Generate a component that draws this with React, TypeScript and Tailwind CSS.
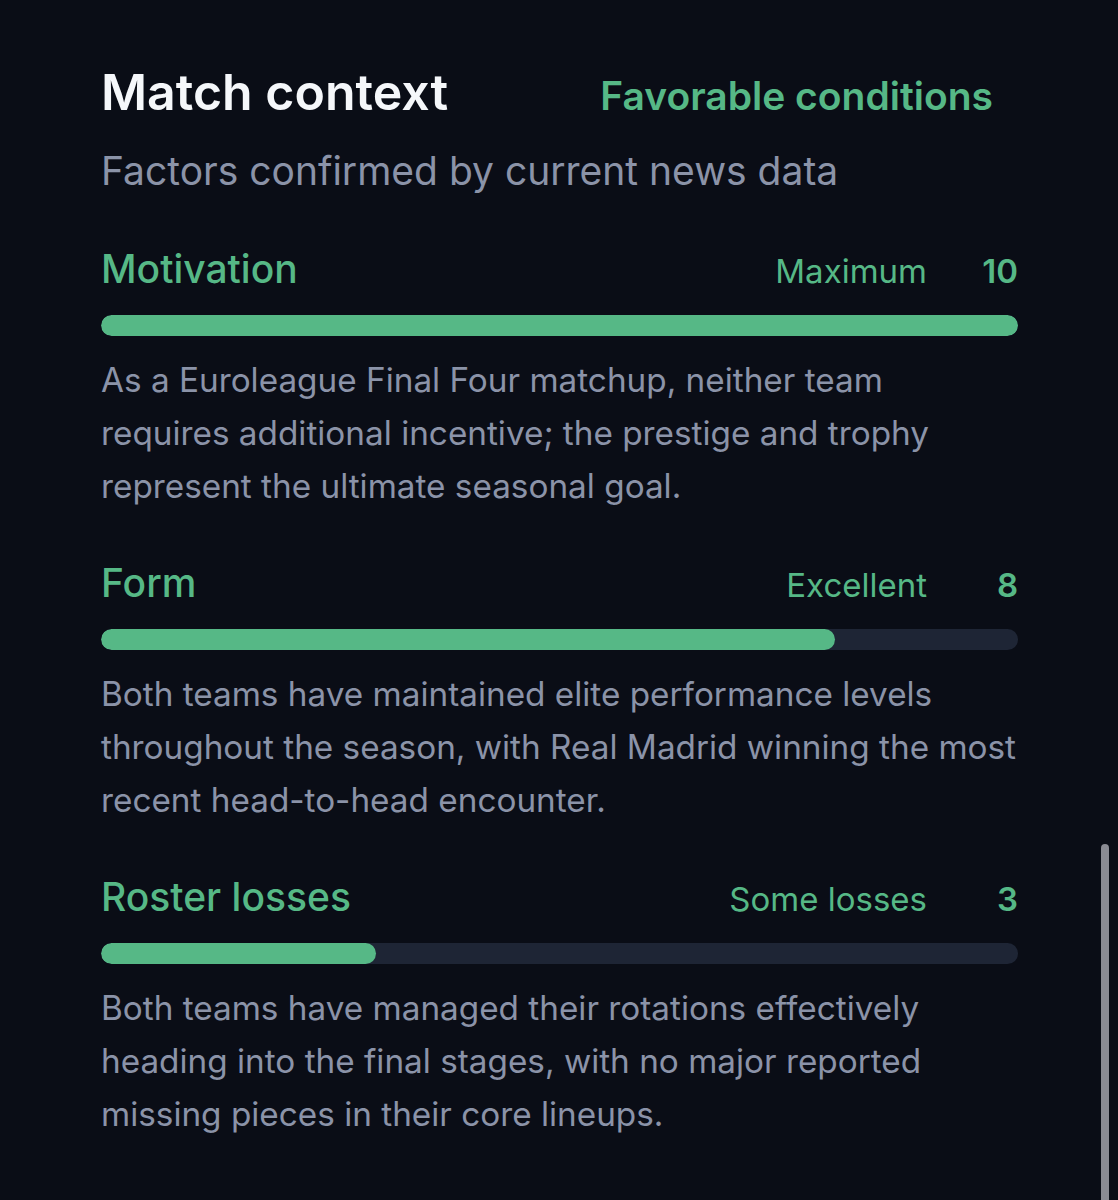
import React from "react";

type Factor = {
  label: string;
  status: string;
  score: number;
  text: string;
};

const factors: Factor[] = [
  {
    label: "Motivation",
    status: "Maximum",
    score: 10,
    text: "As a Euroleague Final Four matchup, neither team requires additional incentive; the prestige and trophy represent the ultimate seasonal goal.",
  },
  {
    label: "Form",
    status: "Excellent",
    score: 8,
    text: "Both teams have maintained elite performance levels throughout the season, with Real Madrid winning the most recent head-to-head encounter.",
  },
  {
    label: "Roster losses",
    status: "Some losses",
    score: 3,
    text: "Both teams have managed their rotations effectively heading into the final stages, with no major reported missing pieces in their core lineups.",
  },
];

function FactorRow({ factor }: { factor: Factor }) {
  return (
    <div className="flex flex-col">
      <div className="flex items-baseline justify-between h-[48px]">
        <span className="text-[39px] leading-[48px] font-medium text-[#56b886]">
          {factor.label}
        </span>
        <div className="flex items-baseline">
          <span className="text-[33px] leading-[48px] text-[#56b886]">{factor.status}</span>
          <span className="w-[91px] text-right text-[33px] leading-[48px] font-semibold text-[#56b886]">
            {factor.score}
          </span>
        </div>
      </div>
      <div className="mt-[22px] h-[21px] w-full rounded-full bg-[#1e2535] overflow-hidden">
        <div
          className="h-full rounded-full bg-[#56b886]"
          style={{ width: `${factor.score * 10}%` }}
        />
      </div>
      <p className="mt-[18px] text-[33.3px] leading-[53px] text-[#8b93a8]">{factor.text}</p>
    </div>
  );
}

export default function App() {
  return (
    <div
      className="relative min-h-[1200px] w-full bg-[#0a0d16] pl-[101px] pr-[100px] pt-[62px] overflow-hidden"
      style={{ fontFamily: "Inter, 'Noto Sans', sans-serif" }}
    >
      <div className="flex items-baseline justify-between pr-[25px]">
        <h1 className="text-[50px] leading-[60px] font-semibold text-[#f5f7fa]">Match context</h1>
        <span className="text-[39px] leading-[60px] font-semibold text-[#56b886]">
          Favorable conditions
        </span>
      </div>
      <p className="mt-[20px] text-[39px] leading-[49px] text-[#8b93a8]">
        Factors confirmed by current news data
      </p>

      <div className="mt-[50px] flex flex-col gap-[46px]">
        {factors.map((f) => (
          <FactorRow key={f.label} factor={f} />
        ))}
      </div>

      {/* overlay scroll indicator */}
      <div className="absolute right-[9px] top-[844px] h-[380px] w-[8px] rounded-full bg-[#8a8b93]" />
    </div>
  );
}
